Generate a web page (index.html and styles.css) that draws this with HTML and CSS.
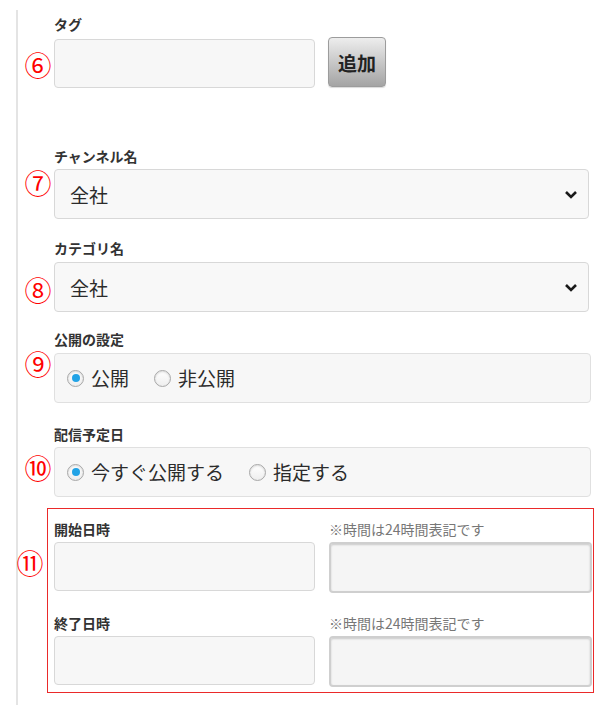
FILE: index.html
```html
<!DOCTYPE html>
<html lang="ja">
<head>
<meta charset="utf-8">
<title>フォーム</title>
<link rel="stylesheet" href="styles.css">
</head>
<body>
<div class="panel">
  <section class="field field--tag">
    <div class="label">タグ</div>
    <div class="row">
      <span class="num num--6">⑥</span>
      <div class="input input--tag"></div>
      <button class="btn-add" type="button">追加</button>
    </div>
  </section>

  <section class="field field--channel">
    <div class="label label--tight">チャンネル名</div>
    <div class="row">
      <span class="num num--7">⑦</span>
      <div class="select">
        <span class="select-value">全社</span>
        <svg class="chevron" width="14" height="9" viewBox="0 0 14 9"><path d="M2 2 L7 7 L12 2" fill="none" stroke="#1a1a1a" stroke-width="2.6"/></svg>
      </div>
    </div>
  </section>

  <section class="field field--category">
    <div class="label">カテゴリ名</div>
    <div class="row">
      <span class="num num--8">⑧</span>
      <div class="select">
        <span class="select-value">全社</span>
        <svg class="chevron" width="14" height="9" viewBox="0 0 14 9"><path d="M2 2 L7 7 L12 2" fill="none" stroke="#1a1a1a" stroke-width="2.6"/></svg>
      </div>
    </div>
  </section>

  <section class="field field--public">
    <div class="label">公開の設定</div>
    <div class="row">
      <span class="num num--9">⑨</span>
      <div class="radio-box">
        <span class="radio radio--on"></span><span class="radio-text">公開</span>
        <span class="radio radio--gap"></span><span class="radio-text">非公開</span>
      </div>
    </div>
  </section>

  <section class="field field--schedule">
    <div class="label label--tight">配信予定日</div>
    <div class="row">
      <span class="num num--10">⑩</span>
      <div class="radio-box">
        <span class="radio radio--on"></span><span class="radio-text">今すぐ公開する</span>
        <span class="radio radio--gap"></span><span class="radio-text">指定する</span>
      </div>
    </div>
  </section>

  <section class="field field--range">
    <div class="row row--range">
      <span class="num num--11">⑪</span>
      <div class="range-box">
        <div class="range">
          <div class="range-label">開始日時</div>
          <div class="range-note">※時間は24時間表記です</div>
          <div class="date-input date-input--first"></div>
          <div class="time-input"></div>
          <div class="range-label range-label--second">終了日時</div>
          <div class="range-note range-label--second">※時間は24時間表記です</div>
          <div class="date-input"></div>
          <div class="time-input"></div>
        </div>
      </div>
    </div>
  </section>
</div>
</body>
</html>
```

FILE: styles.css
```css
* { box-sizing: border-box; }

html, body {
  margin: 0;
  padding: 0;
  background: #ffffff;
}

body {
  font-family: "Noto Sans CJK JP", "Noto Sans", sans-serif;
  color: #333333;
}

.panel {
  margin: 10px 0 0 16px;
  border-left: 2px solid #e4e4e4;
  padding: 5px 0 12px 8px;
  width: 594px;
}

.label {
  margin-left: 28px;
  font-size: 14px;
  line-height: 18px;
  font-weight: 700;
  color: #333333;
  margin-bottom: 5px;
}

.label--tight { margin-bottom: 4px; }

.field--tag .label { margin-bottom: 6px; }
.field--tag { margin-bottom: 59px; }
.field--channel { margin-bottom: 20px; }
.field--category { margin-bottom: 18px; }
.field--public { margin-bottom: 22px; }
.field--schedule { margin-bottom: 11px; }

.row {
  display: flex;
  align-items: flex-start;
  gap: 4px;
}

.num {
  width: 24px;
  flex: 0 0 24px;
  display: flex;
  justify-content: center;
  font-family: "Noto Sans CJK JP", sans-serif;
  font-size: 27px;
  line-height: 27px;
  height: 27px;
  color: #ff0000;
}

.num--6 { margin-top: 12px; }
.num--7 { margin-top: 0; }
.num--8 { margin-top: 14px; }
.num--9 { margin-top: -3px; }
.num--10 { margin-top: 7px; }
.num--11 { margin-top: 41px; margin-left: -8px; margin-right: 1px; }

.input {
  background: #f7f7f7;
  border: 1px solid #d8d8d8;
  border-radius: 4px;
}

.input--tag {
  width: 261px;
  height: 49px;
}

.btn-add {
  margin: -2px 0 0 9px;
  width: 58px;
  height: 50px;
  padding: 0;
  border: 1px solid #9c9c9c;
  border-radius: 4px;
  background: linear-gradient(#ededed, #a4a4a4);
  font-family: "Noto Sans CJK JP", sans-serif;
  font-size: 19px;
  font-weight: 700;
  color: #222222;
  box-shadow: 0 1px 1px rgba(0, 0, 0, 0.15);
}

.select {
  width: 535px;
  height: 50px;
  display: flex;
  align-items: center;
  justify-content: space-between;
  padding: 0 10px 0 15px;
  background: #f8f8f8;
  border: 1px solid #d8d8d8;
  border-radius: 4px;
}

.select-value {
  font-size: 19px;
  color: #2b2b2b;
}

.chevron { display: block; }

.radio-box {
  width: 537px;
  height: 50px;
  display: flex;
  align-items: center;
  padding-left: 12px;
  background: #f7f7f7;
  border: 1px solid #e0e0e0;
  border-radius: 4px;
}

.radio {
  width: 17px;
  height: 17px;
  flex: 0 0 17px;
  border-radius: 50%;
  border: 1px solid #a8a8a8;
  background: linear-gradient(#ffffff, #eeeeee);
  box-shadow: inset 0 1px 2px rgba(0, 0, 0, 0.15);
  margin-right: 7px;
  display: flex;
  align-items: center;
  justify-content: center;
}

.radio--on::after {
  content: "";
  width: 8px;
  height: 8px;
  border-radius: 50%;
  background: #22a3e6;
}

.radio--gap { margin-left: 25px; }

.radio-text {
  font-size: 19px;
  line-height: 24px;
  color: #2b2b2b;
}

.range-box {
  width: 547px;
  border: 1px solid #ea2a2a;
  padding: 11px 1px 5px 6px;
}

.range {
  display: grid;
  grid-template-columns: 261px 263px;
  column-gap: 14px;
  align-items: start;
}

.range-label {
  font-size: 14px;
  line-height: 18px;
  font-weight: 700;
  color: #333333;
  margin-bottom: 4px;
}

.range-note {
  font-size: 14px;
  line-height: 18px;
  color: #777777;
  margin-bottom: 4px;
}

.range-label--second { margin-top: 21px; }

.date-input {
  height: 49px;
  background: #f7f7f7;
  border: 1px solid #d8d8d8;
  border-radius: 4px;
}

.time-input {
  height: 51px;
  background: #f5f5f5;
  border: 2px solid #cfcfcf;
  border-radius: 4px;
  box-shadow: inset 0 1px 2px rgba(0, 0, 0, 0.18);
}
```
